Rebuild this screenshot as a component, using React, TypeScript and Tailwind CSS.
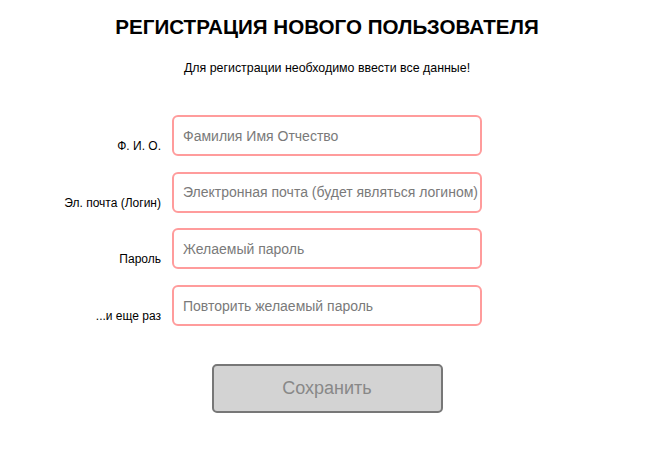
import React from "react";

const fields = [
  { label: "Ф. И. О.", placeholder: "Фамилия Имя Отчество", type: "text" },
  { label: "Эл. почта (Логин)", placeholder: "Электронная почта (будет являться логином)", type: "email" },
  { label: "Пароль", placeholder: "Желаемый пароль", type: "password" },
  { label: "...и еще раз", placeholder: "Повторить желаемый пароль", type: "password" },
];

/** Registration form page. */
const App: React.FC = () => (
  <div className="w-[654px] bg-white font-['Liberation_Sans',Arial,sans-serif] text-black">
    <h1 className="pt-[15px] text-center text-[20.6px] font-bold leading-[24px]">
      РЕГИСТРАЦИЯ НОВОГО ПОЛЬЗОВАТЕЛЯ
    </h1>
    <p className="mt-[22px] text-center text-[12.4px] leading-[14px]">
      Для регистрации необходимо ввести все данные!
    </p>

    <form className="mt-[40px] flex flex-col gap-[15.7px]" onSubmit={(e) => e.preventDefault()}>
      {fields.map((f) => (
        <div key={f.label} className="ml-[50px] flex items-end gap-[11px]">
          <label className="w-[111px] pb-[3px] text-right text-[12px] leading-[14px]">{f.label}</label>
          <input
            type={f.type}
            placeholder={f.placeholder}
            className="h-[41px] w-[310px] rounded-[6px] border-2 border-[#ff9c9c] pl-[9px] pr-[1px] text-[14px] outline-none placeholder:text-[#7a7a7a]"
          />
        </div>
      ))}

      <div className="mt-[22px] flex justify-center">
        <button
          type="submit"
          className="h-[49px] w-[231px] rounded-[5px] border-2 border-[#777777] bg-[#d3d3d3] text-[18px] text-[#888888]"
        >
          Сохранить
        </button>
      </div>
    </form>
  </div>
);

export default App;
